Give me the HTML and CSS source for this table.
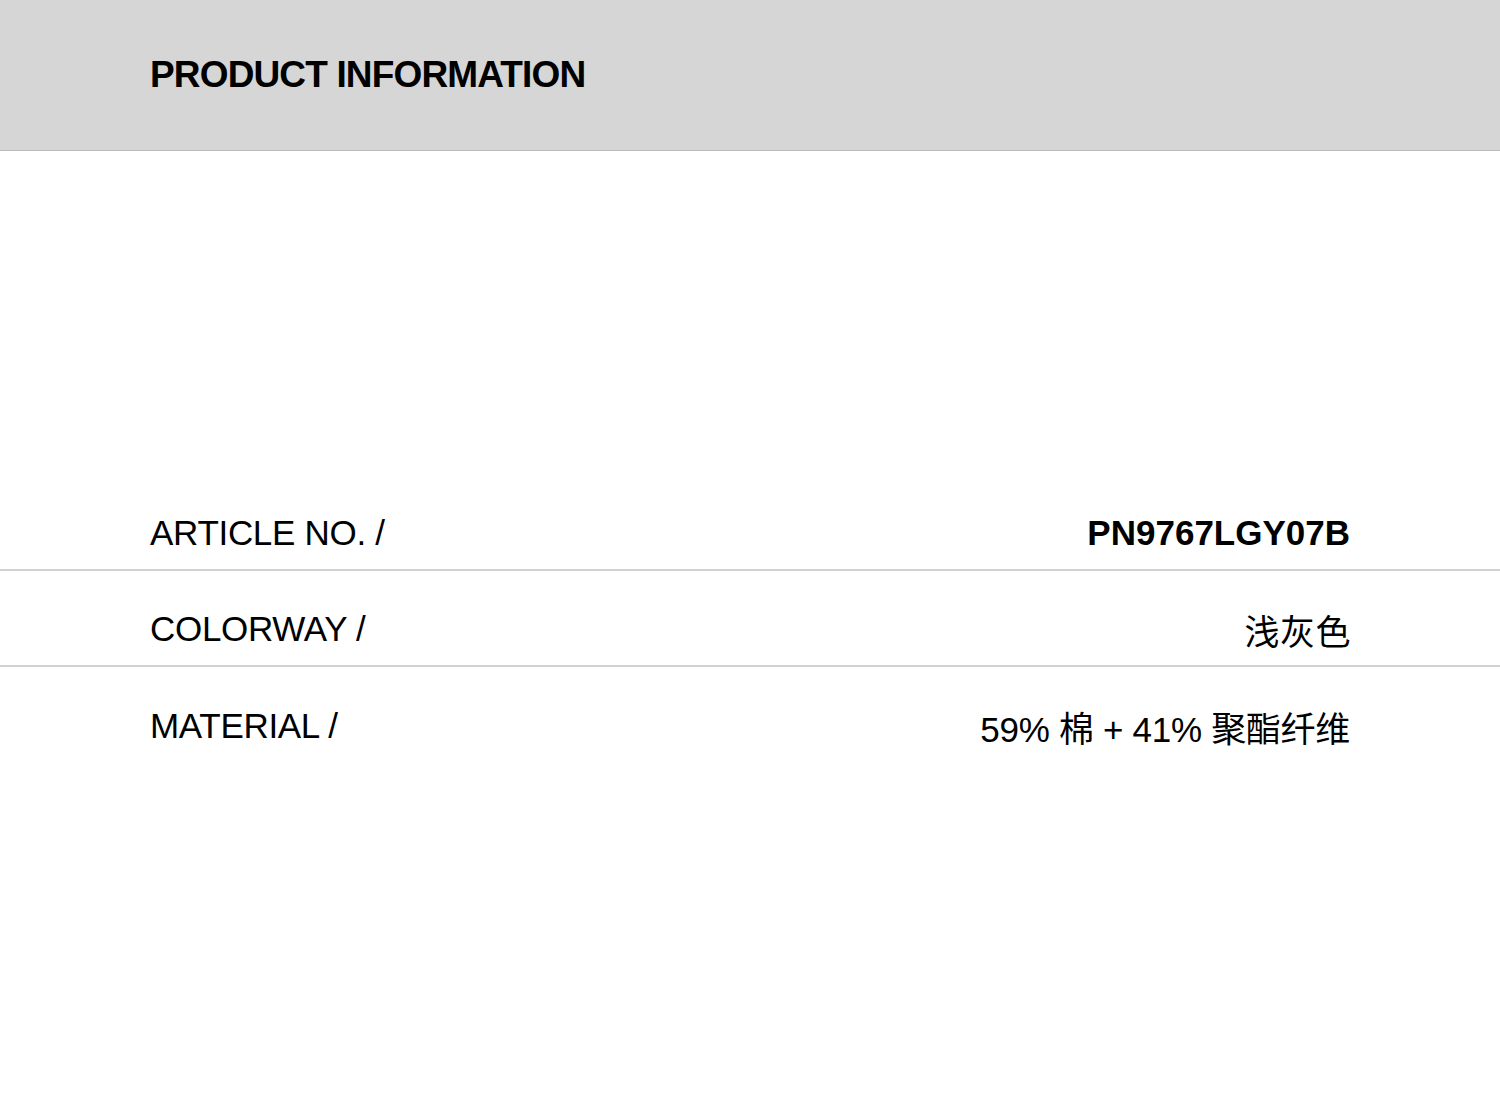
FILE: index.html
```html
<!DOCTYPE html>
<html lang="zh-CN">
<head>
    <meta charset="UTF-8">
    <meta name="viewport" content="width=device-width, initial-scale=1.0">
    <title>Product Information</title>
    <link rel="stylesheet" href="styles.css">
</head>
<body>
<header class="info-header">
    <h1 class="info-title">PRODUCT INFORMATION</h1>
</header>

<main class="info-list">
    <div class="info-row">
        <span class="info-label">ARTICLE NO. /</span>
        <span class="info-value info-value-bold">PN9767LGY07B</span>
    </div>
    <div class="info-row">
        <span class="info-label">COLORWAY /</span>
        <span class="info-value info-value-cn">浅灰色</span>
    </div>
    <div class="info-row">
        <span class="info-label">MATERIAL /</span>
        <span class="info-value">59% 棉 + 41% 聚酯纤维</span>
    </div>
</main>
</body>
</html>
```

FILE: styles.css
```css
* {
    margin: 0;
    padding: 0;
    box-sizing: border-box;
}

body {
    font-family: 'Liberation Sans', 'Noto Sans CJK SC', sans-serif;
    background: #fff;
    color: #000;
    min-height: 100vh;
}

.info-header {
    background: #d6d6d6;
    height: 151px;
    border-bottom: 1px solid #b9b9b9;
    padding: 55px 150px 0;
}

.info-title {
    font-size: 37px;
    font-weight: 700;
    letter-spacing: -0.85px;
    line-height: 40px;
}

.info-list {
    margin-top: 324px;
}

.info-row {
    display: flex;
    justify-content: space-between;
    align-items: center;
    height: 96px;
    padding: 22px 150px 0;
    border-bottom: 2px solid #d2d2d2;
}
.info-row:last-child {
    border-bottom: none;
}

.info-label {
    font-size: 35px;
    letter-spacing: -0.3px;
}

.info-value {
    font-size: 35px;
    letter-spacing: -0.3px;
}
.info-value-bold {
    font-weight: 700;
    letter-spacing: 0;
}
.info-value-cn {
    letter-spacing: 0.5px;
    margin-right: -1px;
}
```
